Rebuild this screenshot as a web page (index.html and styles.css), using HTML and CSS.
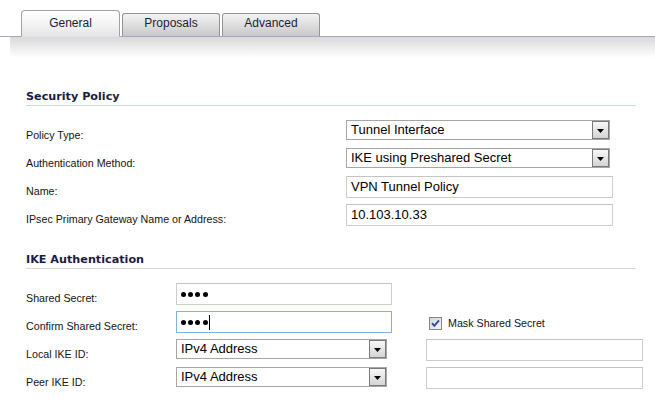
FILE: index.html
```html
<!DOCTYPE html>
<html>
<head>
<meta charset="utf-8">
<title>VPN Policy</title>
<link rel="stylesheet" href="styles.css">
</head>
<body>
<div class="tabbar">
  <div class="tab active">General</div>
  <div class="tab">Proposals</div>
  <div class="tab">Advanced</div>
</div>
<div class="band"></div>

<section class="sec sec-policy">
  <h2 class="sec-title">Security Policy</h2>
  <div class="row">
    <label class="lbl">Policy Type:</label>
    <div class="select"><span class="val">Tunnel Interface</span><span class="btn"><svg width="7" height="4" viewBox="0 0 7 4"><path d="M0 0H7L3.5 4Z" fill="#000"/></svg></span></div>
  </div>
  <div class="row">
    <label class="lbl">Authentication Method:</label>
    <div class="select"><span class="val">IKE using Preshared Secret</span><span class="btn"><svg width="7" height="4" viewBox="0 0 7 4"><path d="M0 0H7L3.5 4Z" fill="#000"/></svg></span></div>
  </div>
  <div class="row">
    <label class="lbl">Name:</label>
    <div class="field">VPN Tunnel Policy</div>
  </div>
  <div class="row">
    <label class="lbl">IPsec Primary Gateway Name or Address:</label>
    <div class="field">10.103.10.33</div>
  </div>
</section>

<section class="sec sec-ike">
  <h2 class="sec-title">IKE Authentication</h2>
  <div class="row">
    <label class="lbl">Shared Secret:</label>
    <div class="field pw"><i class="dot"></i><i class="dot"></i><i class="dot"></i><i class="dot"></i></div>
  </div>
  <div class="row">
    <label class="lbl">Confirm Shared Secret:</label>
    <div class="field pw focus"><i class="dot"></i><i class="dot"></i><i class="dot"></i><i class="dot"></i><i class="caret"></i></div>
    <div class="extra check">
      <svg width="13" height="13" viewBox="0 0 13 13">
        <defs><linearGradient id="cg" x1="0" y1="0" x2="1" y2="1"><stop offset="0" stop-color="#d6d6d6"/><stop offset="1" stop-color="#f6f6f6"/></linearGradient></defs>
        <rect x="0.5" y="0.5" width="12" height="12" fill="url(#cg)" stroke="#868686"/>
        <path d="M3 6.2 L5.3 8.8 L10 3.4" stroke="#2b4a9c" stroke-width="1.9" fill="none"/>
      </svg>
      <span class="check-lbl">Mask Shared Secret</span>
    </div>
  </div>
  <div class="row">
    <label class="lbl">Local IKE ID:</label>
    <div class="select"><span class="val">IPv4 Address</span><span class="btn"><svg width="7" height="4" viewBox="0 0 7 4"><path d="M0 0H7L3.5 4Z" fill="#000"/></svg></span></div>
    <div class="extra field"></div>
  </div>
  <div class="row">
    <label class="lbl">Peer IKE ID:</label>
    <div class="select"><span class="val">IPv4 Address</span><span class="btn"><svg width="7" height="4" viewBox="0 0 7 4"><path d="M0 0H7L3.5 4Z" fill="#000"/></svg></span></div>
    <div class="extra field"></div>
  </div>
</section>
</body>
</html>
```
FILE: styles.css
```css
body {
  margin: 0;
  background: #fff;
  font-family: "Liberation Sans", Arial, sans-serif;
  color: #1c1c1c;
}

/* tabs */
.tabbar {
  display: flex;
  align-items: flex-end;
  gap: 2px;
  height: 37px;
  box-sizing: border-box;
  padding-left: 21px;
  border-bottom: 1px solid #a8a8c2;
}
.tab {
  box-sizing: border-box;
  width: 98px;
  height: 23px;
  padding-top: 2px;
  border: 1px solid #949494;
  border-bottom: none;
  border-radius: 3px 3px 0 0;
  background: linear-gradient(#f3f3f3, #dedede 50%, #c8c8c8);
  text-align: center;
  font-size: 12px;
  line-height: 14px;
  color: #1d1d38;
}
.tab.active {
  position: relative;
  width: 99px;
  height: 27px;
  margin-bottom: -1px;
  padding-top: 5px;
  border-color: #a2a2a2;
  border-bottom: 1px solid #dfe1f0;
  border-radius: 4px 4px 0 0;
  background: linear-gradient(#ffffff, #f5f5f5 45%, #e6e6e6);
}

.band {
  margin-left: 10px;
  height: 21px;
  background: linear-gradient(#d9d9d9, #ffffff);
}

/* sections */
.sec {
  margin-left: 26px;
  width: 610px;
}
.sec-title {
  margin: 32px 0 14px;
  padding-bottom: 1px;
  font: bold 11.2px/14px "DejaVu Sans", Verdana, sans-serif;
  color: #1b1b42;
  border-bottom: 1px solid #c9dce9;
}
.sec-ike .sec-title {
  margin-top: 21px;
  border-bottom-color: #d8d8d8;
}

.row {
  display: flex;
  height: 28px;
}
.row > * { flex-shrink: 0; }
.lbl {
  box-sizing: border-box;
  padding-top: 8px;
  font-size: 10.7px;
  line-height: 14px;
  color: #141414;
}
.sec-policy .lbl { width: 320px; }
.sec-ike .lbl { width: 150px; }

/* controls */
.field {
  box-sizing: border-box;
  height: 22px;
  border: 1px solid #cdcdcd;
  border-top-color: #c4c4c4;
  padding: 0 4px;
  font-size: 13px;
  line-height: 20px;
  color: #000;
  white-space: nowrap;
}
.sec-policy .field { width: 267px; }
.sec-ike .field { width: 216px; }
.sec-ike .extra.field { width: 217px; }
.extra { margin-left: 34px; }
.select + .extra { margin-left: 39px; }

.select {
  box-sizing: border-box;
  height: 20px;
  border: 1px solid #a6a6a6;
  display: flex;
  justify-content: space-between;
  padding-left: 4px;
  font-size: 13px;
  line-height: 18px;
  color: #000;
  background: #fff;
}
.sec-policy .select { width: 264px; }
.sec-ike .select { width: 211px; }
.btn {
  box-sizing: border-box;
  width: 17px;
  height: 18px;
  border: 1px solid #7a7a7a;
  background: linear-gradient(#f7f7f7, #d4d4d4);
  display: flex;
  align-items: center;
  justify-content: center;
  padding-top: 1px;
}
.btn svg { display: block; }

.pw {
  display: flex;
  align-items: center;
}
.dot {
  width: 5px;
  height: 5px;
  border-radius: 50%;
  background: #000;
  margin-right: 2.2px;
}
.caret {
  width: 1px;
  height: 15px;
  background: #000;
  margin-left: -1px;
}
.focus {
  border-color: #7fb2df;
}

.check {
  display: flex;
  align-items: flex-start;
  padding-left: 3px;
  padding-top: 6px;
}
.check svg { display: block; }
.check-lbl {
  margin-left: 6px;
  margin-top: -1px;
  font-size: 10.7px;
  line-height: 14px;
  color: #141414;
}
```
